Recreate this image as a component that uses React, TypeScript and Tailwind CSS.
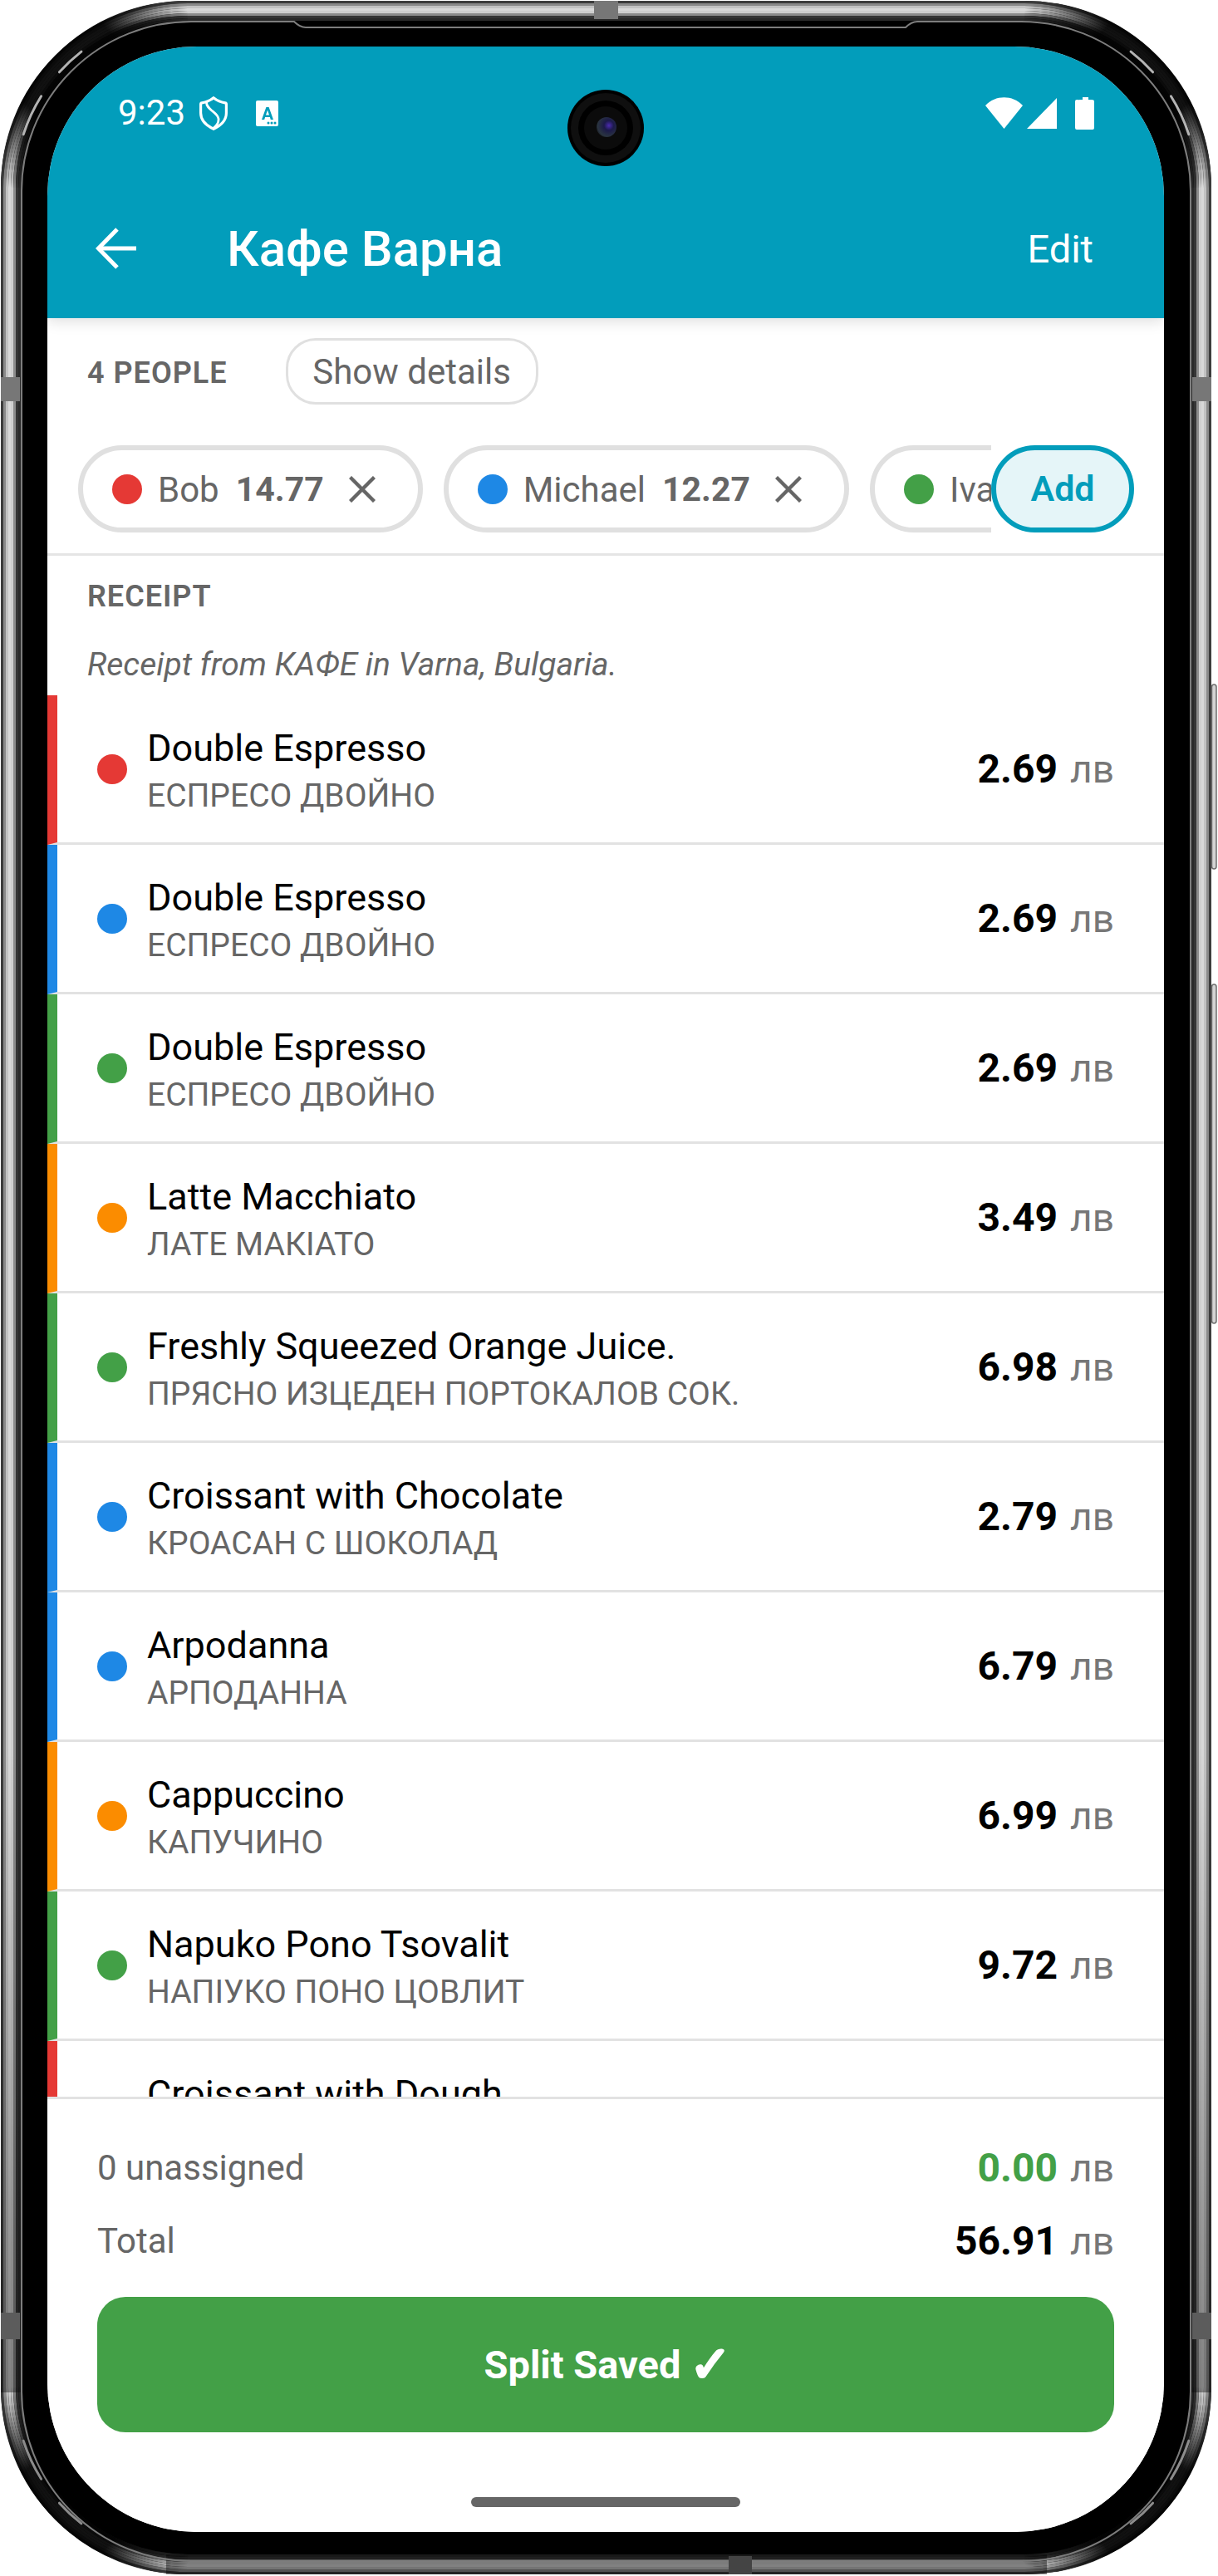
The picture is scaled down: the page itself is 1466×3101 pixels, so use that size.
import React from "react";

const items = [
  { name: "Double Espresso", local: "ЕСПРЕСО ДВОЙНО", price: "2.69", bar: "border-l-[#e53935]", dot: "bg-[#e53935]" },
  { name: "Double Espresso", local: "ЕСПРЕСО ДВОЙНО", price: "2.69", bar: "border-l-[#1e88e5]", dot: "bg-[#1e88e5]" },
  { name: "Double Espresso", local: "ЕСПРЕСО ДВОЙНО", price: "2.69", bar: "border-l-[#43a047]", dot: "bg-[#43a047]" },
  { name: "Latte Macchiato", local: "ЛАТЕ МАКІАТО", price: "3.49", bar: "border-l-[#fb8c00]", dot: "bg-[#fb8c00]" },
  { name: "Freshly Squeezed Orange Juice.", local: "ПРЯСНО ИЗЦЕДЕН ПОРТОКАЛОВ СОК.", price: "6.98", bar: "border-l-[#43a047]", dot: "bg-[#43a047]" },
  { name: "Croissant with Chocolate", local: "КРОАСАН С ШОКОЛАД", price: "2.79", bar: "border-l-[#1e88e5]", dot: "bg-[#1e88e5]" },
  { name: "Arpodanna", local: "АРПОДАННА", price: "6.79", bar: "border-l-[#1e88e5]", dot: "bg-[#1e88e5]" },
  { name: "Cappuccino", local: "КАПУЧИНО", price: "6.99", bar: "border-l-[#fb8c00]", dot: "bg-[#fb8c00]" },
  { name: "Napuko Pono Tsovalit", local: "НАПІУКО ПОНО ЦОВЛИТ", price: "9.72", bar: "border-l-[#43a047]", dot: "bg-[#43a047]" },
  { name: "Croissant with Dough", local: "КРОАСАН С ТЕСТО", price: "12.08", bar: "border-l-[#e53935]", dot: "bg-[#e53935]" },
];

const people = [
  { name: "Bob", amount: "14.77", dot: "bg-[#e53935]" },
  { name: "Michael", amount: "12.27", dot: "bg-[#1e88e5]" },
  { name: "Ivan", amount: "15.10", dot: "bg-[#43a047]" },
];

// bright-to-dark steel bands of the phone edge, outermost first
const steel = ["#3c3c3c", "#8a8a8a", "#c2c2c2", "#d8d8d8", "#cfcfcf", "#8c8c8c", "#353535", "#2a2a2a"];

function arc(r: number, from: number, to: number) {
  const p = (a: number) => {
    const t = (a * Math.PI) / 180;
    return `${226 + r * Math.cos(t)} ${226 + r * Math.sin(t)}`;
  };
  return `M${p(from)} A${r} ${r} 0 0 1 ${p(to)}`;
}

function Corner({ transform, glint }: { transform?: string; glint: string }) {
  return (
    <g transform={transform}>
      <path d="M13 226 A213 213 0 0 1 226 13" fill="none" stroke="url(#cornerShade)" strokeWidth="25" />
      <path d={arc(208, 198, 212)} fill="none" stroke={glint} strokeWidth="3" strokeLinecap="round" />
      <path d={arc(208, 222, 232)} fill="none" stroke={glint} strokeWidth="3" strokeLinecap="round" />
    </g>
  );
}

function PhoneEdge() {
  return (
    <svg className="absolute inset-0" width="1466" height="3101" viewBox="0 0 1466 3101" fill="none">
      <defs>
        <linearGradient id="cornerShade" gradientUnits="userSpaceOnUse" x1="13" y1="226" x2="226" y2="13">
          <stop offset="0" stopColor="#000" stopOpacity="0" />
          <stop offset="0.28" stopColor="#000" stopOpacity="0.92" />
          <stop offset="0.72" stopColor="#000" stopOpacity="0.92" />
          <stop offset="1" stopColor="#000" stopOpacity="0" />
        </linearGradient>
        <linearGradient id="lowerShade" x1="0" y1="0" x2="0" y2="1">
          <stop offset="0" stopColor="#000" stopOpacity="0" />
          <stop offset="1" stopColor="#000" stopOpacity="0.4" />
        </linearGradient>
      </defs>
      {steel.map((c, i) => (
        <rect
          key={c + i}
          x={2.5 + 3 * i}
          y={2.5 + 3 * i}
          width={1454 - 6 * i}
          height={3095 - 6 * i}
          rx={224 - 3 * i}
          stroke={c}
          strokeWidth="3"
        />
      ))}
      {/* lower part of the edge falls into shade */}
      <rect x="1" y="2100" width="25" height="780" fill="url(#lowerShade)" />
      <rect x="1433" y="2100" width="25" height="780" fill="url(#lowerShade)" />
      <rect x="200" y="3075" width="1060" height="24" fill="#000" fillOpacity="0.4" />
      <Corner glint="#b4b4b4" />
      <Corner glint="#b4b4b4" transform="matrix(-1 0 0 1 1459 0)" />
      <Corner glint="#8c8c8c" transform="matrix(1 0 0 -1 0 3100)" />
      <Corner glint="#8c8c8c" transform="matrix(-1 0 0 -1 1459 3100)" />
      {/* antenna seam */}
      <path
        d="M354 26 H230 A204 204 0 0 0 26 230 V2879 A204 204 0 0 0 230 3083 H1229 A204 204 0 0 0 1433 2879 V230 A204 204 0 0 0 1229 26 H1104 Q1097 26 1090 33 H368 Q361 33 354 26 Z"
        stroke="#7d7d7d"
        strokeWidth="2"
      />
      {/* band breaks */}
      <rect x="715" y="1" width="29" height="22" fill="#777" />
      <rect x="1" y="454" width="23" height="29" fill="#777" />
      <rect x="1435" y="454" width="23" height="29" fill="#777" />
      <rect x="1" y="2784" width="23" height="32" fill="#5c5c5c" />
      <rect x="1435" y="2784" width="23" height="32" fill="#5c5c5c" />
      <rect x="877" y="3077" width="28" height="22" fill="#444" />
      {/* side keys */}
      <rect x="1458.5" y="824" width="5.5" height="222" rx="3" fill="#d4d4d4" stroke="#6e6e6e" strokeWidth="1.5" />
      <rect x="1458.5" y="1185" width="5.5" height="408" rx="3" fill="#d4d4d4" stroke="#6e6e6e" strokeWidth="1.5" />
    </svg>
  );
}

function Camera() {
  return (
    <svg className="absolute left-[626px] top-[52px]" width="92" height="92" viewBox="0 0 92 92">
      <defs>
        <radialGradient id="lens" cx="0.62" cy="0.42" r="0.7">
          <stop offset="0" stopColor="#4b2bb0" />
          <stop offset="0.35" stopColor="#1c1a4a" />
          <stop offset="0.8" stopColor="#2a3440" />
          <stop offset="1" stopColor="#15181c" />
        </radialGradient>
      </defs>
      <circle cx="46" cy="46" r="46" fill="#000" />
      <circle cx="46" cy="46" r="42" fill="#0f0f0f" />
      <circle cx="46" cy="46" r="33" fill="#000" />
      <circle cx="46" cy="46" r="26" fill="#0b0b0b" />
      <circle cx="47" cy="45" r="12" fill="url(#lens)" />
    </svg>
  );
}

function StatusBar() {
  return (
    <div className="flex h-[160px] items-center pl-[85px] pr-[84px] text-white">
      <span className="text-[42px] leading-none">9:23</span>
      <svg className="ml-[17px]" width="34" height="41" viewBox="0 0 34 41" fill="none" stroke="#fff" strokeWidth="3.2">
        <path d="M17 1.8 C21 5 26 7.2 31 7.8 Q32.4 8 32.4 9.5 V20 C32.4 29 25 35.5 17 39.2 C9 35.5 1.6 29 1.6 20 V9.5 Q1.6 8 3 7.8 C8 7.2 13 5 17 1.8 Z" />
        <path d="M8.5 7 C8 16 22 19 23 27 C23.5 32 20 36 16 39" strokeWidth="2.8" />
      </svg>
      <svg className="ml-[34px]" width="27" height="31" viewBox="0 0 27 31">
        <rect width="27" height="31" rx="2" fill="#fff" />
        <path d="M7 23 L12.4 8 L15.6 8 L21 23 L17.8 23 L16.9 20 L11.1 20 L10.2 23 Z M12 17.4 L16 17.4 L14 11.5 Z" fill="#029dbb" fillRule="evenodd" />
        <circle cx="15" cy="27" r="1.5" fill="#029dbb" />
        <circle cx="19" cy="27" r="1.5" fill="#029dbb" />
        <circle cx="23" cy="27" r="1.5" fill="#029dbb" />
      </svg>
      <div className="flex-1" />
      <svg width="131" height="39" viewBox="0 0 131 39" fill="#fff">
        <path d="M0 10 C12 -3 33 -3 45 10 L22.5 38 Z" />
        <path d="M86 1 V38 H50 Z" />
        <path d="M112 4 Q112 3 113 3 H117 V0 H124 V3 H128 Q131 3 131 5 V37 Q131 39 129 39 H110 Q108 39 108 37 V5 Q108 3 110 3 H112 Z" />
      </svg>
    </div>
  );
}

function Header() {
  return (
    <div className="relative z-10 h-[327px] shrink-0 bg-[#029dbb] shadow-[0_4px_16px_rgba(0,0,0,0.13)]">
      <StatusBar />
      <div className="flex h-[166px] items-center pl-[58px] pr-[85px] text-white">
        <svg width="50" height="50" viewBox="0 0 50 50" fill="none" stroke="#fff" strokeWidth="5">
          <path d="M49 25 H4" />
          <path d="M26 2 L3.5 25 L26 48" />
        </svg>
        <h1 className="ml-[108px] flex-1 pt-[2px] text-[60px] font-medium leading-none">Кафе Варна</h1>
        <span className="text-[47px] leading-none">Edit</span>
      </div>
      <Camera />
    </div>
  );
}

function PersonChip({ name, amount, dot }: { name: string; amount: string; dot: string }) {
  return (
    <div className="flex h-[105px] shrink-0 items-center rounded-full border-[6px] border-[#e0e0e0] pl-[35px] pr-[51px] text-[42px] leading-none text-[#666]">
      <span className={`h-[36px] w-[36px] rounded-full ${dot}`} />
      <span className="ml-[19px] pt-[2px]">{name}</span>
      <span className="ml-[20px] pt-[2px] text-[41px] font-bold">{amount}</span>
      <svg className="ml-[30px]" width="32" height="32" viewBox="0 0 32 32" stroke="#666" strokeWidth="4.4">
        <path d="M1.5 1.5 L30.5 30.5 M30.5 1.5 L1.5 30.5" />
      </svg>
    </div>
  );
}

function People() {
  return (
    <div className="shrink-0 border-b-[3px] border-[#e5e5e5] pb-[25px] pt-[24px]">
      <div className="flex items-center pl-[48px]">
        <span className="mt-[4px] text-[36px] font-semibold leading-none tracking-[1px] text-[#666]">4 PEOPLE</span>
        <button className="ml-[70px] h-[80px] w-[304px] rounded-[36px] border-[3px] border-[#e0e0e0] pt-[2px] text-[42px] leading-none text-[#666]">
          Show details
        </button>
      </div>
      <div className="mt-[49px] flex items-center pl-[37px] pr-[36px]">
        <div className="flex min-w-0 flex-1 gap-[25px] overflow-hidden">
          {people.map((p) => (
            <PersonChip key={p.name} {...p} />
          ))}
        </div>
        <button className="h-[105px] w-[172px] shrink-0 rounded-full border-[6px] border-[#029dbb] bg-[#e5f5f8] text-[43px] font-semibold leading-none text-[#029dbb]">
          Add
        </button>
      </div>
    </div>
  );
}

function Money({ value, className }: { value: string; className: string }) {
  return (
    <div className="flex items-baseline leading-none">
      <span className={`text-[48px] font-bold ${className}`}>{value}</span>
      <span className="ml-[15px] text-[46px] text-[#777]">лв</span>
    </div>
  );
}

function ReceiptRow({ name, local, price, bar, dot }: (typeof items)[number]) {
  return (
    <div className={`flex h-[180px] shrink-0 items-center border-b-[3px] border-l-[12px] border-b-[#e2e2e2] pl-[48px] pr-[60px] ${bar}`}>
      <span className={`h-[36px] w-[36px] shrink-0 rounded-full ${dot}`} />
      <div className="ml-[24px] mt-[9px] flex-1">
        <div className="text-[45px] leading-[56px] text-black">{name}</div>
        <div className="text-[39px] leading-[58px] text-[#666]">{local}</div>
      </div>
      <Money value={price} className="text-black" />
    </div>
  );
}

function Footer() {
  return (
    <div className="flex h-[524px] shrink-0 flex-col border-t-[3px] border-[#e2e2e2] bg-white px-[60px]">
      <div className="mt-[61px] flex h-[44px] items-center justify-between">
        <span className="text-[42px] leading-none text-[#666]">0 unassigned</span>
        <Money value="0.00" className="text-[#43a047]" />
      </div>
      <div className="mt-[44px] flex h-[44px] items-center justify-between">
        <span className="text-[42px] leading-none text-[#666]">Total</span>
        <Money value="56.91" className="text-black" />
      </div>
      <button className="mt-[45px] flex h-[163px] shrink-0 items-center justify-center rounded-[34px] bg-[#43a047] pl-[5px] text-[47px] font-bold leading-none text-white">
        <span>Split Saved</span>
        <span className="ml-[11px] text-[60px] [-webkit-text-stroke:1.5px_white]">✓</span>
      </button>
      <div className="mx-auto mt-[78px] h-[12px] w-[324px] rounded-full bg-[#666]" />
    </div>
  );
}

export default function App() {
  return (
    <div className="relative h-[3101px] w-[1466px] overflow-hidden bg-white font-['Roboto',sans-serif]">
      <div className="ml-[1px] mt-[1px] h-[3098px] w-[1457px] rounded-[225px] bg-black pl-[56px] pt-[55px]">
        <div className="flex h-[2992px] w-[1344px] flex-col overflow-hidden rounded-[180px] bg-white">
          <Header />
          <People />
          <div className="shrink-0 px-[48px] pt-[36px]">
            <div className="text-[36px] font-semibold leading-[26px] tracking-[1px] text-[#666]">RECEIPT</div>
            <div className="mt-[47px] h-[59px] text-[39px] italic leading-[44px] text-[#666]">
              Receipt from КАФЕ in Varna, Bulgaria.
            </div>
          </div>
          <div className="flex min-h-0 flex-1 flex-col overflow-hidden">
            {items.map((item, i) => (
              <ReceiptRow key={i} {...item} />
            ))}
          </div>
          <Footer />
        </div>
      </div>
      <PhoneEdge />
    </div>
  );
}
